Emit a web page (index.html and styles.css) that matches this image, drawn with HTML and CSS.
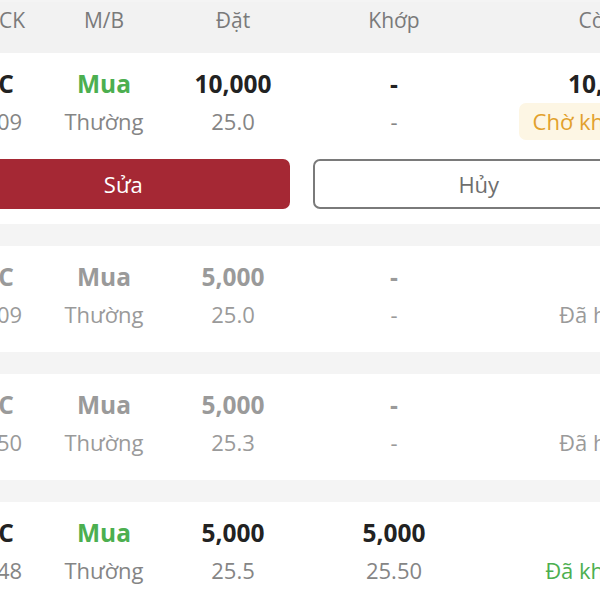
FILE: index.html
```html
<!DOCTYPE html>
<html lang="vi">
<head>
    <meta charset="UTF-8">
    <meta name="viewport" content="width=device-width, initial-scale=1.0">
    <title>Sổ lệnh</title>
    <link rel="stylesheet" href="styles.css">
</head>
<body>
    <div class="screen">
        <div class="page">
            <div class="head cols">
                <div>Mã CK</div>
                <div>M/B</div>
                <div>Đặt</div>
                <div>Khớp</div>
                <div class="end">Còn lại</div>
            </div>

            <div class="order">
                <div class="cols main">
                    <div>VIC</div>
                    <div class="buy">Mua</div>
                    <div>10,000</div>
                    <div>-</div>
                    <div class="end">10,000</div>
                </div>
                <div class="cols sub">
                    <div>14:09</div>
                    <div>Thường</div>
                    <div>25.0</div>
                    <div>-</div>
                    <div class="end"><span class="badge wait">Chờ khớp</span></div>
                </div>
                <div class="actions">
                    <button class="btn-edit">Sửa</button>
                    <button class="btn-cancel">Hủy</button>
                </div>
            </div>

            <div class="order off">
                <div class="cols main">
                    <div>VIC</div>
                    <div>Mua</div>
                    <div>5,000</div>
                    <div>-</div>
                    <div class="end">0</div>
                </div>
                <div class="cols sub">
                    <div>14:09</div>
                    <div>Thường</div>
                    <div>25.0</div>
                    <div>-</div>
                    <div class="end"><span class="badge">Đã hủy</span></div>
                </div>
            </div>

            <div class="order off">
                <div class="cols main">
                    <div>VIC</div>
                    <div>Mua</div>
                    <div>5,000</div>
                    <div>-</div>
                    <div class="end">0</div>
                </div>
                <div class="cols sub">
                    <div>13:50</div>
                    <div>Thường</div>
                    <div>25.3</div>
                    <div>-</div>
                    <div class="end"><span class="badge">Đã hủy</span></div>
                </div>
            </div>

            <div class="order">
                <div class="cols main">
                    <div>VIC</div>
                    <div class="buy">Mua</div>
                    <div>5,000</div>
                    <div>5,000</div>
                    <div class="end">0</div>
                </div>
                <div class="cols sub">
                    <div>13:48</div>
                    <div>Thường</div>
                    <div>25.5</div>
                    <div>25.50</div>
                    <div class="end"><span class="badge done">Đã khớp</span></div>
                </div>
            </div>
        </div>
    </div>
</body>
</html>
```

FILE: styles.css
```css
body {
    font-family: "Open Sans", Arial, sans-serif;
    margin: 0;
    padding: 0;
    background-color: #ffffff;
}

.screen {
    width: 600px;
    height: 600px;
    overflow: hidden;
}

.page {
    width: 720px;
    margin-left: -59px;
    padding-top: 2px;
    background-color: #f4f4f4;
}

.cols {
    display: grid;
    grid-template-columns: 74px 146px 112px 210px 1fr;
    padding: 0 16px;
    text-align: center;
    white-space: nowrap;
}

.cols .end {
    text-align: right;
}

.head {
    background-color: #f2f2f2;
    color: #7a7a7a;
    font-size: 21px;
    line-height: 30px;
    padding-top: 3px;
    padding-bottom: 18px;
}

.order {
    background-color: #ffffff;
    padding: 11px 0 21px;
    margin-bottom: 22px;
}

.main {
    font-size: 24.5px;
    font-weight: 700;
    line-height: 40px;
    color: #222222;
}

.sub {
    font-size: 22px;
    line-height: 34px;
    color: #858585;
}

.buy {
    color: #4caf50;
}

.off .main,
.off .sub {
    color: #9a9a9a;
}

.badge {
    display: inline-block;
    line-height: 37px;
    margin: -1.5px 0;
    padding: 0 14px;
    border-radius: 7px;
    vertical-align: top;
}

.wait {
    background-color: #fdf6e4;
    color: #e2a12c;
}

.done {
    color: #4caf50;
}

.actions {
    display: grid;
    grid-template-columns: 1fr 1fr;
    gap: 23px;
    padding: 0 16px;
    margin-top: 21px;
    margin-bottom: -6px;
}

.actions button {
    height: 50px;
    font-family: "Open Sans", Arial, sans-serif;
    font-size: 22px;
    border-radius: 7px;
    cursor: pointer;
}

.btn-edit {
    background-color: #a52834;
    color: #ffffff;
    border: none;
}

.btn-cancel {
    background-color: #ffffff;
    color: #6e6e6e;
    border: 2px solid #7a7a7a;
}
```
